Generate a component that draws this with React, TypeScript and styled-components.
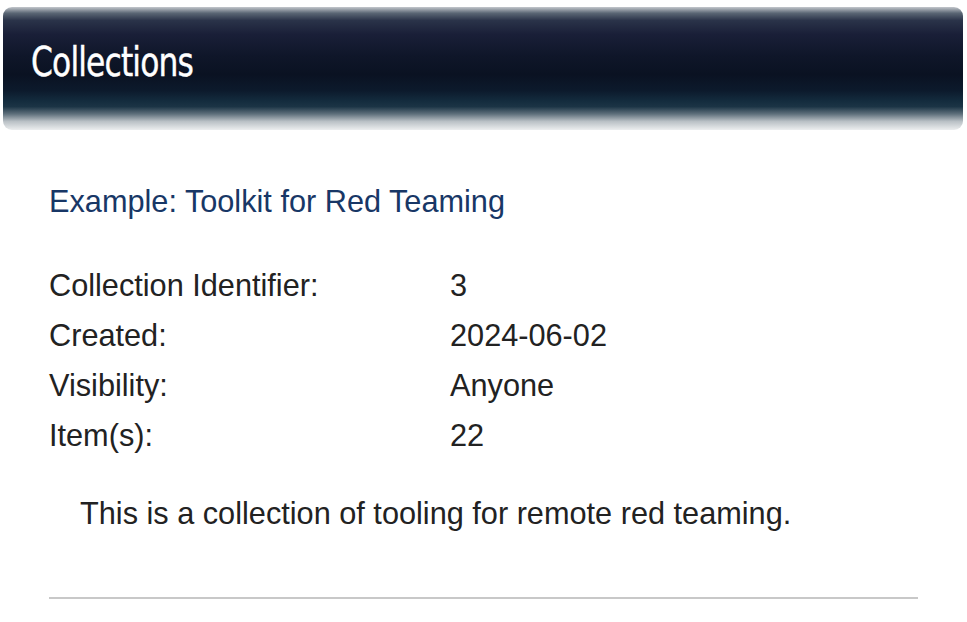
import React from "react";
import styled, { createGlobalStyle } from "styled-components";

const Global = createGlobalStyle`
  html, body { margin: 0; padding: 0; background: #ffffff; }
  body { font-family: "Liberation Sans", Arial, Helvetica, sans-serif; color: #222222; }
`;

const Page = styled.div`
  width: 967px;
  padding-top: 7px;
`;

const Banner = styled.header`
  margin: 0 4px 0 3px;
  height: 123px;
  border-radius: 9px;
  display: flex;
  align-items: center;
  padding: 0 0 12px 28px;
  box-sizing: border-box;
  background: linear-gradient(
    to bottom,
    #c3c7cc 0%,
    #5a6674 5%,
    #2a3349 11%,
    #1a1f38 22%,
    #0f1629 40%,
    #0a1222 55%,
    #0c1a2c 68%,
    #132b3d 76%,
    #1b3445 81%,
    #5f707c 87%,
    #b9c0c5 93%,
    #eceeef 100%
  );
`;

const BannerTitle = styled.h1`
  margin: 0;
  font-family: "DejaVu Sans Condensed", "DejaVu Sans", sans-serif;
  font-weight: 400;
  font-size: 41px;
  letter-spacing: -1px;
  color: #ffffff;
  line-height: 1;
  transform: scaleX(0.85);
  transform-origin: left center;
  -webkit-text-stroke: 0.4px #ffffff;
`;

const Content = styled.main`
  padding: 0 49px 0 49px;
`;

const Title = styled.h2`
  margin: 54px 0 0 0;
  font-size: 30.7px;
  line-height: 36px;
  font-weight: 400;
  color: #183766;
`;

const InfoGrid = styled.dl`
  margin: 41px 0 0 0;
  display: grid;
  grid-template-columns: 401px 1fr;
  grid-auto-rows: 50px;
  font-size: 30.7px;
  line-height: 50px;
`;

const Label = styled.dt`
  margin: 0;
  color: #222222;
`;

const Value = styled.dd`
  margin: 0;
  color: #222222;
`;

const Description = styled.p`
  margin: 35px 0 0 31px;
  font-size: 30.7px;
  line-height: 36px;
  color: #222222;
`;

const Divider = styled.hr`
  margin: 65px 0 0 0;
  border: 0;
  height: 2px;
  background: #c8c8c8;
`;

const rows: [string, string][] = [
  ["Collection Identifier:", "3"],
  ["Created:", "2024-06-02"],
  ["Visibility:", "Anyone"],
  ["Item(s):", "22"],
];

export default function App() {
  return (
    <Page>
      <Global />
      <Banner>
        <BannerTitle>Collections</BannerTitle>
      </Banner>
      <Content>
        <Title>Example: Toolkit for Red Teaming</Title>
        <InfoGrid>
          {rows.map(([k, v]) => (
            <React.Fragment key={k}>
              <Label>{k}</Label>
              <Value>{v}</Value>
            </React.Fragment>
          ))}
        </InfoGrid>
        <Description>This is a collection of tooling for remote red teaming.</Description>
        <Divider />
      </Content>
    </Page>
  );
}
